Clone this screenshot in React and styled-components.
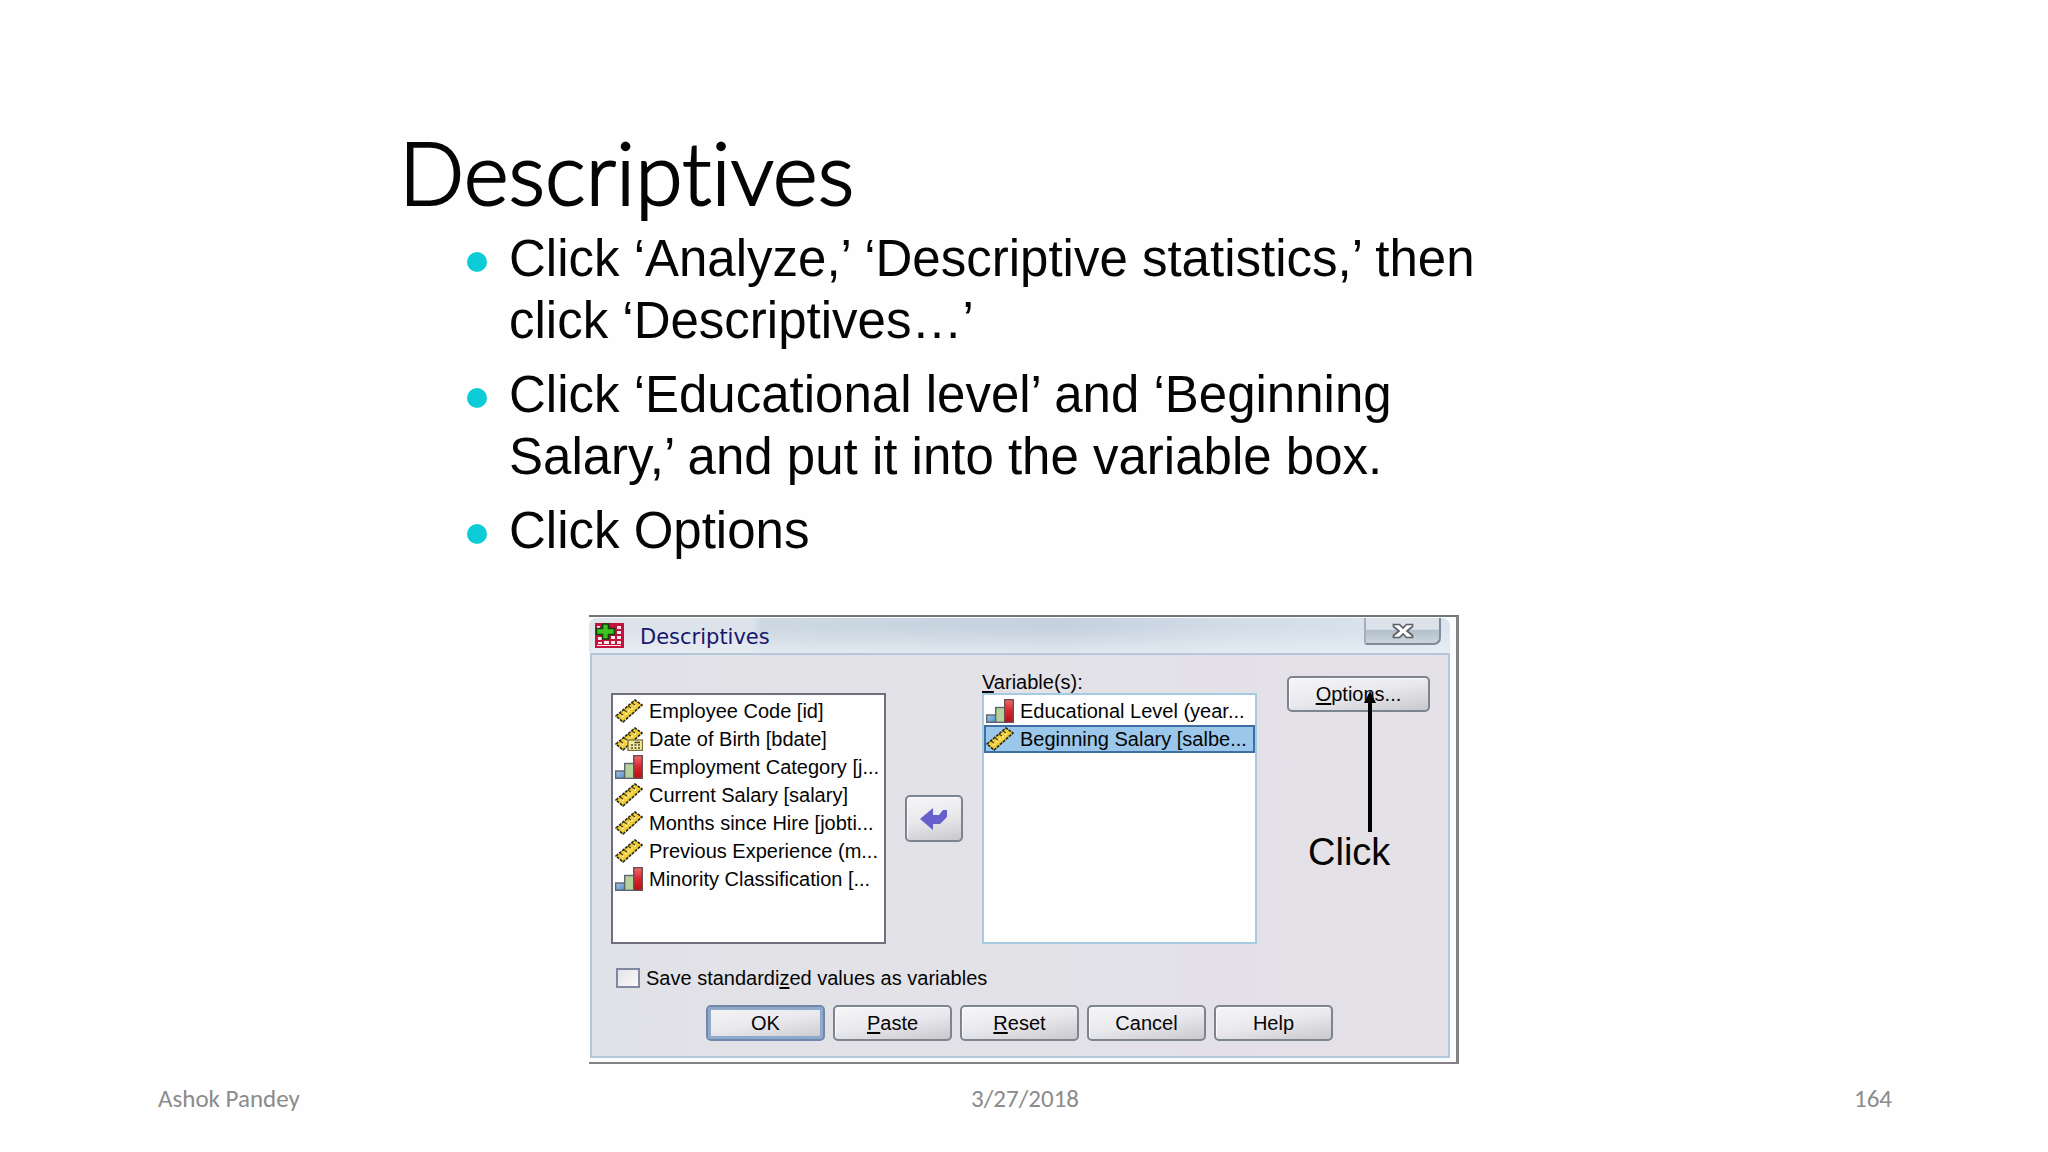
import React from "react";
import styled, { createGlobalStyle } from "styled-components";

const GlobalStyle = createGlobalStyle`
  * { box-sizing: border-box; }
  body {
    margin: 0;
    background: #fefefe;
    color: #050505;
    font-family: "Liberation Sans", Arial, sans-serif;
  }
`;

const Slide = styled.div`
  min-height: 100vh;
  display: flex;
  flex-direction: column;
`;

const Intro = styled.header`
  width: 100%;
  max-width: 1250px;
  margin: 0 auto;
  padding-top: 122px;
`;

const Title = styled.h1`
  margin: 0 0 6px;
  font-family: Lato, Carlito, sans-serif;
  font-weight: 300;
  font-size: 86px;
  line-height: 100px;
  font-variant-ligatures: none;
  -webkit-text-stroke: 2px currentColor;
`;

const Steps = styled.ul`
  list-style: none;
  margin: 0;
  padding: 0 0 0 68px;
  max-width: 1111px;
  display: flex;
  flex-direction: column;
  gap: 12px;
`;

const Step = styled.li`
  display: flex;
  gap: 22px;
  font-size: 51px;
  line-height: 62px;

  &::before {
    content: "";
    flex: none;
    width: 20px;
    height: 20px;
    margin-top: 24px;
    border-radius: 50%;
    background: #0ccdd7;
  }
`;

const Dialog = styled.section`
  width: 870px;
  margin: 53px auto 0;
  border: solid #858083;
  border-width: 2px 3px 2px 0;
  border-top-color: #6f7479;
  background: #fbfcfd;
  padding: 1px 6px 4px 0;
  font-size: 20px;
`;

const TitleBar = styled.div`
  height: 35px;
  display: flex;
  align-items: center;
  padding-left: 6px;
  background:
    linear-gradient(180deg, rgba(255, 255, 255, 0) 30%, rgba(235, 240, 246, 0.7) 100%),
    linear-gradient(100deg, #dde3ea 0 19%, #cdd8e2 20%, #c5d1de 55%, #d3dde8 75%, #dbe5f0 100%);
  border-radius: 8px 8px 0 0;
`;

const DialogTitle = styled.h2`
  flex: 1;
  margin: 0 0 0 16px;
  padding-top: 3px;
  font-family: "DejaVu Sans", Verdana, sans-serif;
  font-weight: 400;
  font-size: 21px;
  line-height: 24px;
  color: #16166c;
`;

const CloseButton = styled.button`
  align-self: flex-start;
  width: 77px;
  height: 27px;
  margin-right: 9px;
  padding: 0;
  display: flex;
  align-items: center;
  justify-content: center;
  border: solid #7f8c9a;
  border-width: 0 2px 2px 2px;
  border-left-color: #a4afbb;
  border-radius: 0 0 7px 3px;
  background: linear-gradient(180deg, #dbe2e9 0 45%, #b3bfca 50%, #cbd5dd 100%);
`;

const Body = styled.div`
  margin-left: 1px;
  padding: 16px 20px 15px 19px;
  border: 2px solid #b5c7da;
  background: linear-gradient(90deg, #e1e2e7, #e4e1e7);
`;

const Columns = styled.div`
  display: grid;
  grid-template-columns: 275px 96px 275px 173px;
`;

const Field = styled.div`
  display: flex;
  flex-direction: column;
  justify-content: flex-end;
`;

const FieldLabel = styled.span`
  height: 22px;
  line-height: 22px;
`;

const List = styled.ul`
  list-style: none;
  margin: 0;
  padding: 2px 0;
  height: 251px;
  border: 2px solid ${(p) => (p.$active ? "#a6cadf" : "#6f6f80")};
  background: #fefefe;
`;

const Item = styled.li`
  height: 28px;
  padding-left: 2px;
  display: flex;
  align-items: center;
  gap: 6px;
  white-space: nowrap;
  background: ${(p) => (p.$selected ? "#9ac7ea" : "transparent")};
  box-shadow: ${(p) => (p.$selected ? "inset 0 0 0 2px #3f6ea3" : "none")};
`;

const Middle = styled.div`
  padding-top: 22px;
  display: flex;
  align-items: center;
  justify-content: center;
`;

const Button = styled.button`
  width: ${(p) => p.$width || 119}px;
  height: ${(p) => p.$height || 36}px;
  padding: 0;
  display: flex;
  align-items: center;
  justify-content: center;
  border: 2px solid ${(p) => (p.$primary ? "#6f88a9" : "#7c848e")};
  border-radius: 5px;
  box-shadow: ${(p) => (p.$primary ? "inset 0 0 0 3px #8fa9ca" : "inset 1px 1px 0 #fbfbfc")};
  background: linear-gradient(170deg, #f6f6f8 0%, #e9e8ec 50%, #c9c9cd 100%);
  color: #050505;
  font-family: inherit;
  font-size: 20px;
  line-height: 24px;
`;

const Mnemonic = styled.span`
  text-decoration: underline;
  text-decoration-thickness: 2px;
  text-underline-offset: 2px;
  text-decoration-skip-ink: none;
`;

const Side = styled.div`
  position: relative;
  margin-left: 30px;
  padding-top: 5px;
`;

const Callout = styled.div`
  position: absolute;
  top: 20px;
  left: 21px;
  display: flex;
  flex-direction: column;
  align-items: flex-start;
  font-size: 38px;
  line-height: 40px;
  pointer-events: none;
`;

const ArrowLine = styled.svg`
  display: block;
  margin-left: 56px;
`;

const CheckRow = styled.div`
  display: flex;
  align-items: center;
  gap: 6px;
  margin-top: 23px;
  padding-left: 5px;
  height: 22px;
`;

const Checkbox = styled.input`
  appearance: none;
  flex: none;
  width: 24px;
  height: 20px;
  margin: 0;
  border: 2px solid #8089a0;
  background: linear-gradient(135deg, #e4e2e6, #fafafb);
`;

const CheckLabel = styled.label`
  line-height: 22px;
`;

const Actions = styled.div`
  display: flex;
  gap: 8px;
  margin-top: 16px;
  padding-left: 95px;
`;

const Footer = styled.footer`
  margin-top: auto;
  padding: 0 156px 38px 158px;
  display: grid;
  grid-template-columns: 1fr 1fr 1fr;
  font-family: Carlito, Calibri, sans-serif;
  font-size: 25px;
  line-height: 30px;
  color: #8b8b8b;
`;

const FooterCell = styled.span`
  text-align: ${(p) => p.$align || "left"};
`;

const RulerShape = () => (
  <g>
    <path d="M1 17 L20 1 L27 6 L8 23 Z" fill="#f0cf3a" stroke="#2a2714" strokeWidth="1.6" strokeDasharray="3 1" />
    <path d="M7 18 L22 5" stroke="#fff3a0" strokeWidth="1.6" strokeDasharray="2 2" />
    <path d="M5 14 l3 2 M9 11 l3 2 M13 7 l3 2 M17 4 l3 2" stroke="#4d4310" strokeWidth="1.3" />
  </g>
);

const ScaleIcon = () => (
  <svg width="28" height="24" viewBox="0 0 28 24" aria-hidden="true">
    <RulerShape />
  </svg>
);

const DateIcon = () => (
  <svg width="28" height="24" viewBox="0 0 28 24" aria-hidden="true">
    <RulerShape />
    <rect x="13" y="13" width="14.5" height="10.5" fill="#f3eb9c" stroke="#77703c" strokeWidth="1.3" />
    <path d="M16 18h2M19.5 18h2M23 18h2M16 21h2M19.5 21h2M23 21h2M19.5 15.5h5.5" stroke="#4d4726" strokeWidth="1.5" />
  </svg>
);

const OrdinalIcon = () => (
  <svg width="28" height="24" viewBox="0 0 28 24" aria-hidden="true">
    <defs>
      <linearGradient id="barBlue" x1="0" y1="0" x2="1" y2="1">
        <stop offset="0" stopColor="#a9cdf0" />
        <stop offset="1" stopColor="#4f87c0" />
      </linearGradient>
      <linearGradient id="barRed" x1="0" y1="0" x2="0" y2="1">
        <stop offset="0" stopColor="#f06a6a" />
        <stop offset="0.5" stopColor="#d8252b" />
        <stop offset="1" stopColor="#b80f14" />
      </linearGradient>
    </defs>
    <rect x="0.7" y="16" width="9" height="7.3" fill="url(#barBlue)" stroke="#5d6470" strokeWidth="1.4" />
    <rect x="9.7" y="8.5" width="9" height="14.8" fill="#b4d29a" stroke="#5d6470" strokeWidth="1.4" />
    <rect x="18.7" y="0.7" width="8.6" height="22.6" fill="url(#barRed)" stroke="#6a5055" strokeWidth="1.4" />
  </svg>
);

const AppIcon = () => (
  <svg width="29" height="25" viewBox="0 0 29 25" aria-hidden="true">
    <rect width="29" height="25" fill="#c4123d" />
    <path
      d="M3 14h4v3H3zM9 18h5v3H9zM3 19h4v2H3zM16 18h4v3h-4zM22 18h4v3h-4zM16 13h4v3h-4zM22 13h4v3h-4zM22 8h4v3h-4zM22 3h4v3h-4zM2 3h3v2H2zM2 22h24v1H2z"
      fill="#fbe9ee"
    />
    <path d="M7.5 1h6v4.5h6v6h-6V16h-6v-4.5h-6v-6h6z" fill="#3cc421" stroke="#12400c" strokeWidth="1.6" />
  </svg>
);

const CloseIcon = () => (
  <svg width="22" height="16" viewBox="0 0 22 16" aria-hidden="true">
    <path
      d="M1.5 1.5h6L11 5l3.5-3.5h6v2L15 8l5.5 4.5v2h-6L11 11l-3.5 3.5h-6v-2L7 8 1.5 3.5z"
      fill="#fdfdfd"
      stroke="#5c6168"
      strokeWidth="1.7"
    />
  </svg>
);

const MoveIcon = () => (
  <svg width="28" height="22" viewBox="0 0 28 22" aria-hidden="true">
    <path d="M0 11 L13 0 V7 H19 L23 2 H27 V9 L20 16 H13 V22 Z" fill="#6660cc" />
  </svg>
);

const icons = { scale: ScaleIcon, date: DateIcon, ordinal: OrdinalIcon };

const steps = [
  "Click ‘Analyze,’ ‘Descriptive statistics,’ then click ‘Descriptives…’",
  "Click ‘Educational level’ and ‘Beginning Salary,’ and put it into the variable box.",
  "Click Options",
];

const available = [
  ["scale", "Employee Code [id]"],
  ["date", "Date of Birth [bdate]"],
  ["ordinal", "Employment Category [j..."],
  ["scale", "Current Salary [salary]"],
  ["scale", "Months since Hire [jobti..."],
  ["scale", "Previous Experience (m..."],
  ["ordinal", "Minority Classification [..."],
];

const chosen = [
  ["ordinal", "Educational Level (year..."],
  ["scale", "Beginning Salary [salbe..."],
];

function VariableList({ items, selected, active, ...rest }) {
  return (
    <List role="listbox" $active={active} {...rest}>
      {items.map(([kind, text], i) => {
        const Icon = icons[kind];
        return (
          <Item key={text} role="option" aria-selected={i === selected} $selected={i === selected}>
            <Icon />
            {text}
          </Item>
        );
      })}
    </List>
  );
}

export default function App() {
  return (
    <Slide>
      <GlobalStyle />
      <Intro>
        <Title>Descriptives</Title>
        <Steps>
          {steps.map((s) => (
            <Step key={s}>{s}</Step>
          ))}
        </Steps>
      </Intro>

      <Dialog aria-labelledby="dialog-title">
        <TitleBar>
          <AppIcon />
          <DialogTitle id="dialog-title">Descriptives</DialogTitle>
          <CloseButton type="button" aria-label="Close">
            <CloseIcon />
          </CloseButton>
        </TitleBar>
        <Body>
          <Columns>
            <Field>
              <VariableList items={available} aria-label="Available variables" />
            </Field>
            <Middle>
              <Button type="button" aria-label="Move variable" $width={58} $height={47}>
                <MoveIcon />
              </Button>
            </Middle>
            <Field>
              <FieldLabel id="variables-label">
                <Mnemonic>V</Mnemonic>ariable(s):
              </FieldLabel>
              <VariableList items={chosen} selected={1} active aria-labelledby="variables-label" />
            </Field>
            <Side>
              <Button type="button" $width={143}>
                <span>
                  <Mnemonic>O</Mnemonic>ptions...
                </span>
              </Button>
              <Callout>
                <ArrowLine width="12" height="141" viewBox="0 0 12 141" aria-hidden="true">
                  <path d="M4 10h4v131H4z" />
                  <path d="M6 0l6 12H0z" />
                </ArrowLine>
                Click
              </Callout>
            </Side>
          </Columns>
          <CheckRow>
            <Checkbox type="checkbox" id="save-standardized" />
            <CheckLabel htmlFor="save-standardized">
              Save standardi<Mnemonic>z</Mnemonic>ed values as variables
            </CheckLabel>
          </CheckRow>
          <Actions>
            <Button type="button" $primary>
              OK
            </Button>
            <Button type="button">
              <span>
                <Mnemonic>P</Mnemonic>aste
              </span>
            </Button>
            <Button type="button">
              <span>
                <Mnemonic>R</Mnemonic>eset
              </span>
            </Button>
            <Button type="button">Cancel</Button>
            <Button type="button">Help</Button>
          </Actions>
        </Body>
      </Dialog>

      <Footer>
        <FooterCell>Ashok Pandey</FooterCell>
        <FooterCell $align="center">3/27/2018</FooterCell>
        <FooterCell $align="right">164</FooterCell>
      </Footer>
    </Slide>
  );
}
